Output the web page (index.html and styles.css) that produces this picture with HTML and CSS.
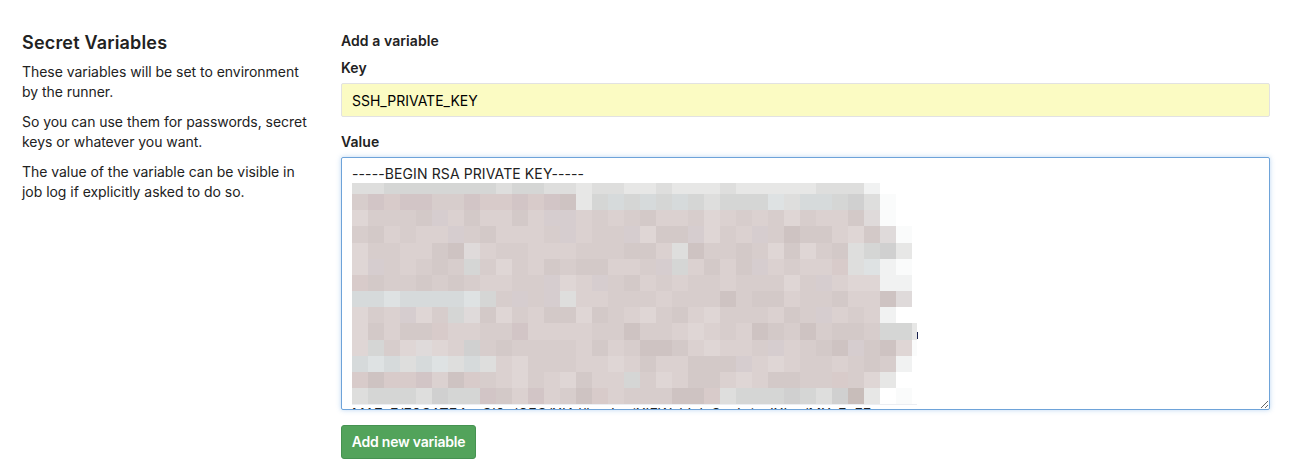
FILE: index.html
```
<!DOCTYPE html>
<html lang="en">
<head>
<meta charset="utf-8">
<title>Secret Variables</title>
<link rel="stylesheet" href="styles.css">
</head>
<body>
<main class="settings">
  <aside class="intro">
    <h4 class="intro-title">Secret Variables</h4>
    <p>These variables will be set to environment<br>by the runner.</p>
    <p>So you can use them for passwords, secret<br>keys or whatever you want.</p>
    <p>The value of the variable can be visible in<br>job log if explicitly asked to do so.</p>
  </aside>
  <form class="form">
    <h5 class="form-title">Add a variable</h5>
    <label class="label" for="key">Key</label>
    <input class="input" id="key" type="text" value="SSH_PRIVATE_KEY">
    <label class="label label-value" for="value">Value</label>
    <div class="value-box">
      <textarea class="textarea" id="value" spellcheck="false">-----BEGIN RSA PRIVATE KEY-----











MA7aE/F0CATE4saCl0a/GEC/XIA//haoIza(XIEWahIalaCzaIa(azIXIaa/MXaEaFE</textarea>
      <svg class="mosaic" id="mosaic" width="566" height="222" shape-rendering="crispEdges" aria-hidden="true"></svg>
    </div>
    <button class="button" type="button">Add new variable</button>
  </form>
</main>
<script src="mosaic.js"></script>
</body>
</html>
```
FILE: styles.css
```
* { box-sizing: border-box; }
body {
  margin: 0;
  background: #fff;
  color: #222;
  font: 14px/20px Inter, "Liberation Sans", sans-serif;
}
.settings {
  display: grid;
  grid-template-columns: 319px 929px;
  padding: 31px 0 0 22px;
}
.intro-title {
  margin: 0 0 8px;
  padding-top: 1px;
  font-size: 18px;
  line-height: 22px;
  font-weight: 600;
  letter-spacing: .18px;
}
.intro p { margin: 0 0 10px; white-space: nowrap; letter-spacing: -.04px; }
.form { display: flex; flex-direction: column; align-items: flex-start; }
.form-title {
  margin: 0 0 7px;
  font-size: 14px;
  line-height: 20px;
  font-weight: 600;
  letter-spacing: .08px;
}
.label { font-weight: 600; margin-bottom: 5px; letter-spacing: .08px; }
.label-value { margin-top: 15px; }
.input {
  width: 100%;
  height: 34px;
  padding: 6px 10px;
  border: 1px solid #e2e2e2;
  border-radius: 2px;
  background: #fbfbc3;
  color: #000;
  font: inherit;
  outline: none;
}
.value-box { position: relative; width: 100%; height: 253px; }
.textarea {
  display: block;
  width: 100%;
  height: 253px;
  padding: 6px 10px;
  border: 1px solid #6ea3d9;
  border-radius: 2px;
  box-shadow: 0 0 5px rgba(104, 164, 224, .45);
  background: #fff;
  color: #222;
  font: inherit;
  letter-spacing: .11px;
  white-space: pre;
  overflow: hidden;
  resize: both;
  outline: none;
}
.mosaic { position: absolute; left: 11px; top: 26px; }
.button {
  margin-top: 15px;
  width: 135px;
  height: 34px;
  padding: 0;
  border: 1px solid #459251;
  border-radius: 3px;
  background: #52a35b;
  color: #fff;
  font: 600 14px/20px Inter, "Liberation Sans", sans-serif;
  letter-spacing: -.22px;
}
```
FILE: mosaic.js
```
// Pixelated cover over the private key body: one character per cell.
const palette = {
  1: '#dfd6d5', 2: '#dbd1d0', 3: '#d7cdcc', 4: '#d3c9c8', 5: '#cec3c2',
  p: '#d8cbca', q: '#d2c5c6', v: '#d6cdcf', k: '#c8bdba', n: '#dfdada',
  g: '#d5d6d5', h: '#dededd', i: '#e7e7e6', d: '#d0d0d0',
  b: '#d6dadb', c: '#dee2e3', x: '#f1f2f2', y: '#fafbfb', w: '#ffffff'
};
const rows = [
  'hhggggggghgghhihhiihiiihiiiiihhhx...',
  '3qpqq33qppqpq5igbgbgbghgggchbbgdhy..',
  '13334v242242vv232342231232313224ny..',
  '342322v342223v233v144v132v3544214ny.',
  '1332245n233222333442h5334314134hgdi.',
  '1v32343g31324344223vg2424v2322phcxy.',
  'p43343432233v12v3423233233313v211xx.',
  'bbcbbbbcg3v3vh22333233353442334225n.',
  '132v13gn413244143213421333243v232xw.',
  '14244p2233q2222335332123254353443ggi',
  '1g31n12d343333242355421223v2345v451y',
  'bcbhbchbh213332212422444v212332343x.',
  'p5ppq25p321321422g312442124433p31iw.',
  'hggghdggq42q235p233355phgggdghdkiwy.'
];
const tops = [0, 11, 27, 43, 60, 76, 92, 108, 124, 140, 157, 173, 189, 205, 221];
const svg = document.getElementById('mosaic');
function rect(x, y, w, h, fill) {
  const r = document.createElementNS('http://www.w3.org/2000/svg', 'rect');
  const attrs = { x, y, width: w, height: h, fill };
  for (const name in attrs) r.setAttribute(name, attrs[name]);
  svg.appendChild(r);
}
rows.forEach((row, j) => {
  [...row].forEach((c, i) => {
    if (palette[c]) rect(i * 16, tops[j], i === 35 ? 5 : 16, tops[j + 1] - tops[j], palette[c]);
  });
});
rect(0, 221, 565, 1, '#eceef3');
rect(565, 149, 1, 7, '#17204f');
```
